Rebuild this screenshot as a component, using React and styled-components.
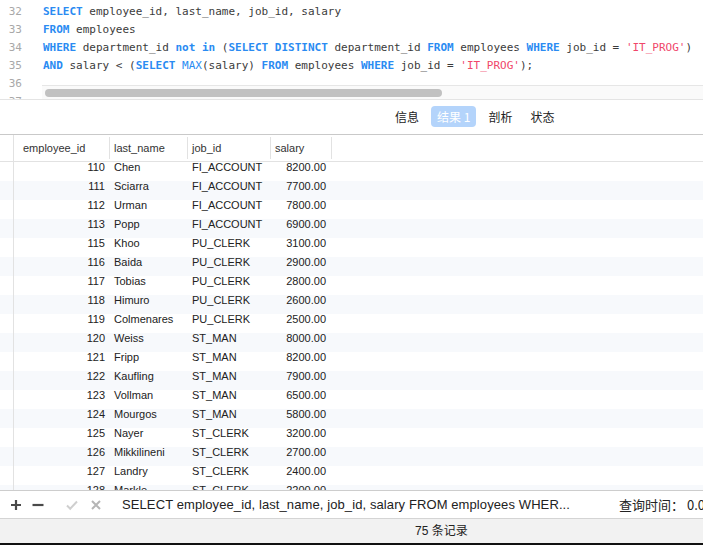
import styled, { createGlobalStyle } from 'styled-components';

const GlobalStyle = createGlobalStyle`
	html, body {
		margin: 0;
		padding: 0;
		background: #fff;
	}
	body {
		font-family: 'Liberation Sans', Arial, sans-serif;
		overflow: hidden;
	}
`;

const codeLines = [
	{ n: 32, parts: [['k', 'SELECT'], ['t', ' employee_id, last_name, job_id, salary']] },
	{ n: 33, parts: [['k', 'FROM'], ['t', ' employees']] },
	{
		n: 34,
		parts: [
			['k', 'WHERE'],
			['t', ' department_id '],
			['k', 'not in'],
			['t', ' ('],
			['k', 'SELECT DISTINCT'],
			['t', ' department_id '],
			['k', 'FROM'],
			['t', ' employees '],
			['k', 'WHERE'],
			['t', ' job_id = '],
			['s', "'IT_PROG'"],
			['t', ')'],
		],
	},
	{
		n: 35,
		parts: [
			['k', 'AND'],
			['t', ' salary < ('],
			['k', 'SELECT'],
			['t', ' '],
			['f', 'MAX'],
			['t', '(salary) '],
			['k', 'FROM'],
			['t', ' employees '],
			['k', 'WHERE'],
			['t', ' job_id = '],
			['s', "'IT_PROG'"],
			['t', ');'],
		],
	},
	{ n: 36, parts: [] },
	{ n: 37, parts: [] },
];

const rows = [
	[110, 'Chen', 'FI_ACCOUNT', '8200.00'],
	[111, 'Sciarra', 'FI_ACCOUNT', '7700.00'],
	[112, 'Urman', 'FI_ACCOUNT', '7800.00'],
	[113, 'Popp', 'FI_ACCOUNT', '6900.00'],
	[115, 'Khoo', 'PU_CLERK', '3100.00'],
	[116, 'Baida', 'PU_CLERK', '2900.00'],
	[117, 'Tobias', 'PU_CLERK', '2800.00'],
	[118, 'Himuro', 'PU_CLERK', '2600.00'],
	[119, 'Colmenares', 'PU_CLERK', '2500.00'],
	[120, 'Weiss', 'ST_MAN', '8000.00'],
	[121, 'Fripp', 'ST_MAN', '8200.00'],
	[122, 'Kaufling', 'ST_MAN', '7900.00'],
	[123, 'Vollman', 'ST_MAN', '6500.00'],
	[124, 'Mourgos', 'ST_MAN', '5800.00'],
	[125, 'Nayer', 'ST_CLERK', '3200.00'],
	[126, 'Mikkilineni', 'ST_CLERK', '2700.00'],
	[127, 'Landry', 'ST_CLERK', '2400.00'],
	[128, 'Markle', 'ST_CLERK', '2200.00'],
];

const tabs = ['信息', '结果 1', '剖析', '状态'];

const App = () => {
	return (
		<Window>
			<GlobalStyle />
			<Editor>
				<Gutter>
					{codeLines.map((l) => (
						<LineNo key={l.n}>{l.n}</LineNo>
					))}
				</Gutter>
				<Code>
					{codeLines.map((l) => (
						<CodeLine key={l.n}>
							{l.parts.map(([kind, text], i) => (
								<Token key={i} $kind={kind}>
									{text}
								</Token>
							))}
						</CodeLine>
					))}
					<HScroll>
						<Thumb />
					</HScroll>
				</Code>
			</Editor>

			<TabBar>
				{tabs.map((t, i) => (
					<Tab key={t} $active={i === 1}>
						{t}
					</Tab>
				))}
			</TabBar>

			<Grid>
				<HeaderRow>
					<Corner />
					<HeadCell $pad='9px'>employee_id</HeadCell>
					<HeadCell>last_name</HeadCell>
					<HeadCell>job_id</HeadCell>
					<HeadCell>salary</HeadCell>
					<div />
				</HeaderRow>
				{rows.map((r, i) => (
					<DataRow key={r[0]} $striped={i % 2 === 1}>
						<RowHead />
						<Cell $right='5px'>{r[0]}</Cell>
						<Cell>{r[1]}</Cell>
						<Cell>{r[2]}</Cell>
						<Cell $right='6px'>{r[3]}</Cell>
						<span />
					</DataRow>
				))}
			</Grid>

			<Toolbar>
				<IconGroup $gap='10px' $after='22px'>
					<IconBtn>
						<svg width='12' height='12' viewBox='0 0 12 12'>
							<path d='M6 1v10M1 6h10' stroke='#4a4a4a' strokeWidth='2.2' />
						</svg>
					</IconBtn>
					<IconBtn>
						<svg width='12' height='12' viewBox='0 0 12 12'>
							<path d='M0.5 6h11' stroke='#4a4a4a' strokeWidth='2.2' />
						</svg>
					</IconBtn>
				</IconGroup>
				<IconGroup $gap='12px' $after='20px'>
					<IconBtn>
						<svg width='12' height='12' viewBox='0 0 12 12'>
							<path d='M1 6.5l3.2 3.2L11 2.5' fill='none' stroke='#cfcfcf' strokeWidth='2' />
						</svg>
					</IconBtn>
					<IconBtn>
						<svg width='12' height='12' viewBox='0 0 12 12'>
							<path d='M2 2l8 8M10 2l-8 8' stroke='#b5b5b5' strokeWidth='2' />
						</svg>
					</IconBtn>
				</IconGroup>
				<SqlText>
					SELECT employee_id, last_name, job_id, salary FROM employees WHER...
				</SqlText>
				<QueryTime>查询时间： 0.0</QueryTime>
			</Toolbar>

			<StatusBar>75 条记录</StatusBar>
			<Dock />
		</Window>
	);
};

const Window = styled.div`
	width: 703px;
	height: 545px;
	display: flex;
	flex-direction: column;
	overflow: hidden;
	background: #fff;
`;

const Editor = styled.div`
	height: 99px;
	flex: none;
	display: flex;
	overflow: hidden;
	border-bottom: 1px solid #e4e4e4;
	font-family: 'DejaVu Sans Mono', monospace;
	font-size: 11px;
	line-height: 18px;
`;

const Gutter = styled.div`
	width: 22px;
	padding-top: 3px;
	text-align: right;
	color: #a8a8a8;
	flex: none;
`;

const LineNo = styled.div`
	height: 18px;
`;

const Code = styled.div`
	position: relative;
	flex: 1;
	padding: 3px 0 0 21px;
	white-space: pre;
	color: #3b3b3b;
`;

const CodeLine = styled.div`
	height: 18px;
`;

const Token = styled.span`
	color: ${(p) =>
		p.$kind === 'k' || p.$kind === 'f' ? '#2a8bf2' : p.$kind === 's' ? '#f0466a' : 'inherit'};
	font-weight: ${(p) => (p.$kind === 'k' ? 'bold' : 'normal')};
`;

const HScroll = styled.div`
	position: absolute;
	left: 20px;
	right: 0;
	top: 85px;
	height: 14px;
	background: #fafafa;
	border-top: 1px solid #e6e6e6;
	box-sizing: border-box;
	padding: 3px 3px 0 3px;
`;

const Thumb = styled.div`
	width: 397px;
	height: 8px;
	border-radius: 4px;
	background: #c1c1c1;
`;

const TabBar = styled.div`
	height: 32px;
	padding: 0 0 2px 389px;
	flex: none;
	display: flex;
	align-items: center;
	gap: 6px;
	border-bottom: 1px solid #c9c9c9;
	font-family: 'Noto Sans CJK SC', 'Liberation Sans', sans-serif;
	font-size: 12px;
`;

const Tab = styled.div`
	height: 21px;
	line-height: 21px;
	padding: 0 6px;
	border-radius: 4px;
	color: ${(p) => (p.$active ? '#fff' : '#222')};
	background: ${(p) => (p.$active ? '#b4d4fb' : 'transparent')};
`;

const Grid = styled.div`
	flex: 1;
	overflow: hidden;
	font-size: 11px;
	color: #222;
`;

const columns = '14px 96px 78px 83px 61px 1fr';

const HeaderRow = styled.div`
	display: grid;
	grid-template-columns: ${columns};
	height: 26px;
	border-bottom: 1px solid #e2e2e2;
	color: #333;
`;

const Corner = styled.div`
	border-right: 1px solid #e2e2e2;
`;

const HeadCell = styled.div`
	padding-left: ${(p) => p.$pad || '4px'};
	margin: 2px 0;
	border-right: 1px solid #e2e2e2;
	line-height: 22px;
	white-space: nowrap;
`;

const DataRow = styled.div`
	display: grid;
	grid-template-columns: ${columns};
	height: 19px;
	background: ${(p) => (p.$striped ? '#f7f9fc' : '#fff')};
`;

const RowHead = styled.div`
	border-right: 1px solid #e2e2e2;
`;

const Cell = styled.div`
	line-height: 10px;
	padding: 0 ${(p) => p.$right || '4px'};
	text-align: ${(p) => (p.$right ? 'right' : 'left')};
	white-space: nowrap;
	overflow: hidden;
`;

const Toolbar = styled.div`
	height: 27px;
	flex: none;
	display: flex;
	align-items: center;
	padding-left: 10px;
	border-top: 1px solid #cdcdcd;
	border-bottom: 1px solid #d4d4d4;
	background: #fff;
	white-space: nowrap;
	overflow: hidden;
`;

const IconGroup = styled.div`
	display: flex;
	gap: ${(p) => p.$gap};
	margin-right: ${(p) => p.$after};
`;

const IconBtn = styled.div`
	width: 12px;
	height: 12px;
	display: flex;
	svg {
		display: block;
	}
`;

const SqlText = styled.div`
	font-size: 13px;
	letter-spacing: 0.1px;
	color: #222;
	width: 497px;
	flex: none;
`;

const QueryTime = styled.div`
	font-family: 'Noto Sans CJK SC', 'Liberation Sans', sans-serif;
	font-size: 13px;
	color: #222;
	flex: none;
`;

const StatusBar = styled.div`
	height: 24px;
	flex: none;
	background: #f2f2f2;
	padding-left: 415px;
	line-height: 24px;
	font-family: 'Liberation Sans', 'Noto Sans CJK SC', sans-serif;
	font-size: 12px;
	color: #222;
`;

const Dock = styled.div`
	height: 2px;
	flex: none;
	background: #111;
`;

export default App;
